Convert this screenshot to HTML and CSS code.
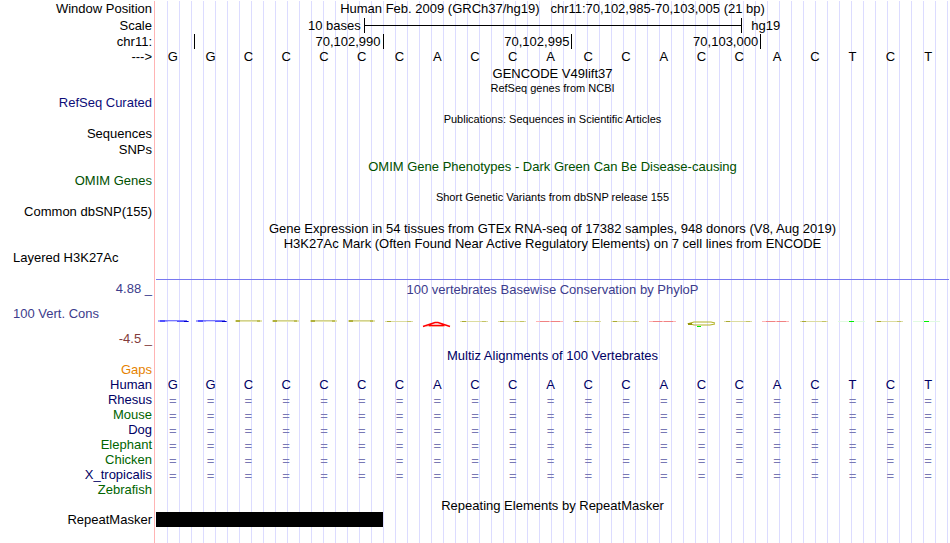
FILE: index.html
```html
<!DOCTYPE html>
<html lang="en">
<head>
<meta charset="utf-8">
<title>Human chr11:70,102,985-70,103,005</title>
<link rel="stylesheet" href="styles.css">
</head>
<body>
<main class="browser" id="browser"></main>
<script src="browser.js"></script>
</body>
</html>
```
FILE: styles.css
```css
* { box-sizing: border-box; }
body {
  margin: 0;
  background: #fff;
  color: #000;
  font: 13px/15px "Liberation Sans", Arial, Helvetica, sans-serif;
}
.browser {
  min-height: 100vh;
  padding-right: 1px;
  background:
    linear-gradient(#ffb4b4, #ffb4b4) 154px 0 / 1px 100% no-repeat,
    repeating-linear-gradient(to right, transparent 0 11px, #dcdcff 11px 12px) 156px 0 no-repeat;
}
.row {
  display: grid;
  grid-template-columns: 152px minmax(0, 1fr);
  column-gap: 4px;
  height: 15px;
}
.head { height: 17px; }
.short { height: 14px; }
.tall { height: 16px; }
.spaced { margin-top: 1px; }
.label { text-align: right; white-space: nowrap; }
.start { text-align: left; padding-left: 13px; }
.title { text-align: center; white-space: pre; }
.small { font-size: 11px; }
.navy { color: #0c0c78; }
.deep { color: #000064; }
.green { color: #005000; }
.leaf { color: #006400; }
.orange { color: #e68200; }
.indigo { color: #3c3c8c; }
.maroon { color: #823c3c; }

.scale { display: grid; grid-template-columns: 11fr 20fr 11fr; }
.from { text-align: right; padding-right: 3px; }
.to { padding-left: 10px; }
.bar {
  height: 15px;
  margin-right: -1px;
  border: solid #000;
  border-width: 0 1px;
  background: linear-gradient(#000, #000) 0 7px / 100% 1px no-repeat;
}
.ruler { display: grid; grid-template-columns: 1fr 5fr 5fr 5fr 5fr; }
.tick {
  height: 15px;
  margin-right: -1px;
  border-right: 1px solid #000;
  padding-right: 2px;
  text-align: right;
}
.tick:last-child { border: 0; }
.bases { display: grid; grid-template-columns: repeat(21, minmax(0, 1fr)); }
.bases span { text-align: center; padding-right: 4px; }
.match { color: #7878b4; line-height: 17px; height: 15px; }

.conservation { height: auto; margin-top: 14px; }
.axis { display: grid; row-gap: 10px; padding-top: 2px; align-content: start; }
.plot { border-top: 1px solid #7878f0; padding-top: 2px; }
.plot svg { display: block; width: 100%; height: 12px; margin-top: 20px; }
.multiz { height: 14px; margin-top: 2px; }
.block { height: 15px; width: 28.6%; background: #000; }
```
FILE: browser.js
```js
const root = document.getElementById('browser');
const bases = [...'GGCCCCCACCACCACCACTCT'];

function row(label, labelClass, track, rowClass) {
  const el = document.createElement('div');
  el.className = 'row ' + (rowClass || '');
  el.innerHTML = `<div class="label ${labelClass || ''}">${label}</div>${track || '<div></div>'}`;
  root.append(el);
}
const title = (text, cls) => `<div class="title ${cls || ''}">${text}</div>`;
const letters = (list, cls) => `<div class="bases ${cls || ''}">${list.map(b => `<span>${b}</span>`).join('')}</div>`;

// Flattened score glyph for each base, in a 793-unit wide plot.
function glyph(base, i) {
  const x = Math.round(i * 793 / 21) + 2;
  const rect = (dx, y, w, h, fill) => `<rect x="${x + dx}" y="${y}" width="${w}" height="${h}" fill="${fill}"/>`;
  if (i < 2) {
    return rect(0, 3, 10, 2, '#a0a0ff') + rect(2, 3, 5, 2, '#5050ff') + rect(7, 3, 22, 1, '#7878ff')
      + rect(10, 4, 15, 1, '#d0d0ff') + rect(19, 4, 12, 1, '#5050ff') + rect(26, 4, 4, 1, '#0000c8');
  }
  if (i < 6) {
    return rect(1, 3, 27, 2, '#e4e4ae') + rect(2, 3, 4, 2, '#b0b03c') + rect(6, 3, 18, 1, '#d2d28c')
      + rect(23, 3, 3, 2, '#bebe5a');
  }
  if (i === 7) {
    return rect(4, 9, 19, 1, '#f5dcc8')
      + `<path d="M${x + 1} 9.5 L${x + 13} 5.5 H${x + 16} L${x + 28} 9.5 M${x + 7} 8.5 H${x + 22}" fill="none" stroke="#f00" stroke-width="1.5"/>`;
  }
  if (i === 14) {
    return `<path d="M${x + 28} 6 L${x + 24} 5 H${x + 7} L${x + 2} 6.5 L${x + 7} 8 H${x + 23} L${x + 28} 7" fill="none" stroke="#b4b428" stroke-width="1.2"/>`
      + rect(1, 6, 4, 2, '#96960a') + rect(10, 9, 4, 1, '#00f000');
  }
  if (base === 'A') return rect(0, 4, 27, 1, '#ffb4b4') + rect(4, 4, 9, 1, '#f08282') + rect(15, 4, 9, 1, '#f08282');
  if (base === 'T') return rect(0, 4, 27, 1, '#e1fae1') + rect(11, 4, 5, 1, '#00f000');
  return rect(0, 4, 28, 1, '#dcdca0') + rect(2, 4, 4, 1, '#aaaa32') + rect(22, 4, 4, 1, '#c3c364');
}

row('Window Position', '', title('Human Feb. 2009 (GRCh37/hg19)   chr11:70,102,985-70,103,005 (21 bp)'), 'head spaced');
row('Scale', '', '<div class="scale"><span class="from">10 bases</span><span class="bar"></span><span class="to">hg19</span></div>', 'tall');
row('chr11:', '', '<div class="ruler"><span class="tick"></span><span class="tick">70,102,990</span><span class="tick">70,102,995</span><span class="tick">70,103,000</span><span class="tick"></span></div>');
row('---&gt;', '', letters(bases), 'tall');
row('', '', title('GENCODE V49lift37'), 'spaced');
row('', '', title('RefSeq genes from NCBI', 'small'), 'short');
row('RefSeq Curated', 'navy', '', 'tall');
row('', '', title('Publications: Sequences in Scientific Articles', 'small'), 'short spaced');
row('Sequences', '', '', 'tall');
row('SNPs', '', '', 'tall');
row('', '', title('OMIM Gene Phenotypes - Dark Green Can Be Disease-causing', 'green'), 'short spaced');
row('OMIM Genes', 'green', '', 'tall');
row('', '', title('Short Genetic Variants from dbSNP release 155', 'small'), 'short spaced');
row('Common dbSNP(155)', '', '', 'tall');
row('', '', title('Gene Expression in 54 tissues from GTEx RNA-seq of 17382 samples, 948 donors (V8, Aug 2019)'), 'spaced');
row('', '', title('H3K27Ac Mark (Often Found Near Active Regulatory Elements) on 7 cell lines from ENCODE'), 'short');
row('Layered H3K27Ac', 'start');
row(
  '<div class="indigo">4.88 _</div><div class="indigo start">100 Vert. Cons</div><div class="maroon">-4.5 _</div>',
  'axis',
  `<div class="plot">${title('100 vertebrates Basewise Conservation by PhyloP', 'indigo')}
    <svg viewBox="0 0 793 12" preserveAspectRatio="none" aria-hidden="true">${bases.map(glyph).join('')}</svg></div>`,
  'conservation'
);
row('', '', title('Multiz Alignments of 100 Vertebrates', 'deep'), 'multiz');
row('Gaps', 'orange');
row('Human', 'deep', letters(bases, 'deep'));
const matches = letters(bases.map(() => '='), 'match');
[['Rhesus', 'deep'], ['Mouse', 'leaf'], ['Dog', 'deep'], ['Elephant', 'leaf'], ['Chicken', 'leaf'], ['X_tropicalis', 'deep']]
  .forEach(([name, cls]) => row(name, cls, matches));
row('Zebrafish', 'leaf');
row('', '', title('Repeating Elements by RepeatMasker'), 'short spaced');
row('RepeatMasker', '', '<div class="block"></div>');
```
